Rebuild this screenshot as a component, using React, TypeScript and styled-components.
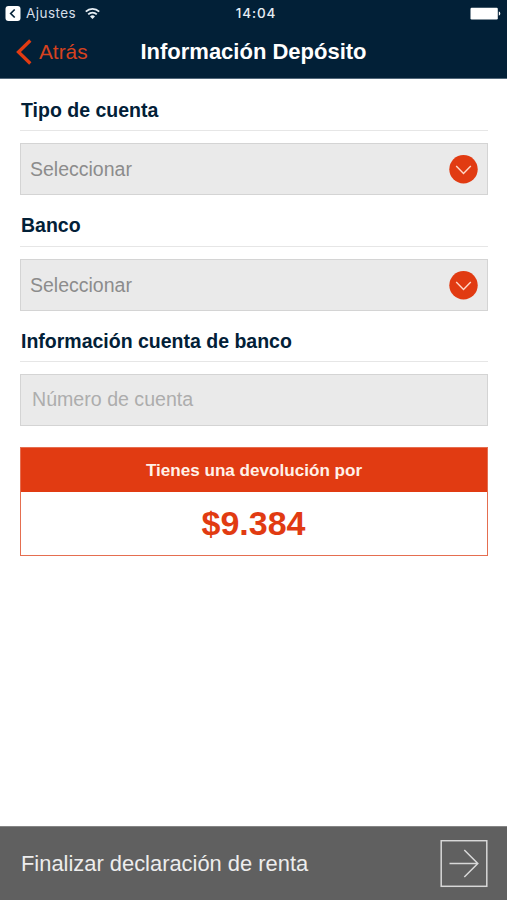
import React from "react";
import styled, { createGlobalStyle } from "styled-components";

const navy = "#022037";
const orange = "#e13b12";

const GlobalStyle = createGlobalStyle`
  * { box-sizing: border-box; }
  body { margin: 0; background: #fff; font-family: "Liberation Sans", Arial, sans-serif; }
`;

const Screen = styled.div`
  width: 100%;
  height: 900px;
  display: flex;
  flex-direction: column;
  overflow: hidden;
  background: #fff;
`;

const Header = styled.header`
  height: 79px;
  flex: none;
  background: ${navy};
  border-bottom: 1px solid #526779;
`;

const StatusBar = styled.div`
  height: 27px;
  display: grid;
  grid-template-columns: 1fr auto 1fr;
  align-items: center;
  padding: 0 6px 0 5px;
  color: #d5dee7;
  font-family: Inter, sans-serif;
  font-size: 13.5px;
  line-height: 27px;
`;

const StatusLeft = styled.div`
  display: flex;
  align-items: center;
`;

const ReturnLabel = styled.span`
  margin: 0 9px 0 5px;
  letter-spacing: 0.45px;
`;

const Clock = styled.span`
  font-weight: 500;
  letter-spacing: 0.9px;
  padding-left: 6px;
  color: #e6edf3;
`;

const Battery = styled.svg`
  justify-self: end;
`;

const NavBar = styled.div`
  height: 51px;
  display: grid;
  grid-template-columns: 1fr auto 1fr;
  align-items: center;
  padding: 0 15px 1px;
`;

const BackButton = styled.button`
  display: flex;
  align-items: center;
  gap: 6px;
  justify-self: start;
  padding: 0;
  border: 0;
  background: none;
  color: #d6421f;
  font: 20.8px/24px "Liberation Sans", Arial, sans-serif;
`;

const Title = styled.h1`
  margin: 0;
  color: #fff;
  font-size: 22px;
  line-height: 26px;
`;

const Form = styled.main`
  flex: 1;
  padding: 0 19px 0 20px;
`;

const Field = styled.section<{ $height: number }>`
  height: ${(p) => p.$height}px;
`;

const FieldTitle = styled.h2<{ $gap?: number }>`
  margin: 0;
  height: 52px;
  padding: 0 1px ${(p) => p.$gap ?? 9}px;
  display: flex;
  align-items: flex-end;
  border-bottom: 1px solid #e6e6e6;
  color: ${navy};
  font-size: 19.5px;
  line-height: 22px;
`;

const SelectBox = styled.button`
  width: 100%;
  height: 52px;
  margin-top: 12px;
  padding: 0 9px;
  display: flex;
  align-items: center;
  justify-content: space-between;
  border: 1px solid #d4d4d4;
  background: #eaeaea;
  color: #8c8c8c;
  font: 19.5px/22px "Liberation Sans", Arial, sans-serif;
`;

const AccountInput = styled.input`
  display: block;
  width: 100%;
  height: 52px;
  margin-top: 12px;
  padding: 0 11px 1px;
  border: 1px solid #d4d4d4;
  border-radius: 0;
  background: #eaeaea;
  font: 19.6px/22px "Liberation Sans", Arial, sans-serif;
  &::placeholder { color: #adadad; opacity: 1; }
`;

const RefundCard = styled.section`
  height: 109px;
  border: 1px solid #e56e50;
  text-align: center;
`;

const RefundHeading = styled.div`
  height: 44px;
  background: ${orange};
  color: #fff1e8;
  font-size: 17.1px;
  font-weight: 700;
  line-height: 45px;
`;

const Amount = styled.div`
  color: ${orange};
  font-size: 34px;
  font-weight: 700;
  line-height: 63px;
  padding-right: 1px;
`;

const Footer = styled.button`
  width: 100%;
  height: 74px;
  flex: none;
  display: flex;
  align-items: center;
  justify-content: space-between;
  padding: 0 19px 0 21px;
  border: 0;
  border-top: 1px solid #858585;
  background: #606060;
  color: #ededed;
  font: 21.9px/26px "Liberation Sans", Arial, sans-serif;
`;

const DownIcon = () => (
  <svg width="29" height="29" viewBox="0 0 29 29" fill="none">
    <circle cx="14.5" cy="14.3" r="14.2" fill={orange} />
    <path d="M7.2 11 14.5 18.4 21.8 11" stroke="#ffd9c9" strokeWidth="1.4" />
  </svg>
);

export default function App() {
  return (
    <Screen>
      <GlobalStyle />
      <Header>
        <StatusBar>
          <StatusLeft>
            <svg width="16" height="16" viewBox="0 0 16 16" fill="none">
              <rect x=".5" y="0" width="15" height="15" rx="3" fill="#fff" />
              <path d="M9.7 3.5 5.7 7.5l4 4" stroke={navy} strokeWidth="1.7" />
            </svg>
            <ReturnLabel>Ajustes</ReturnLabel>
            <svg width="15" height="12" viewBox="0 0 15 12" fill="none" stroke="#e8eff5" strokeWidth="1.8">
              <path d="M.8 3.7a9.5 9.5 0 0 1 13.4 0M3.2 6.3a6.1 6.1 0 0 1 8.6 0" />
              <path d="M7.5 11 5 8.5a3.5 3.5 0 0 1 5 0z" fill="#e8eff5" stroke="none" />
            </svg>
          </StatusLeft>
          <Clock>14:04</Clock>
          <Battery width="31" height="13" viewBox="0 0 31 13" fill="#fff">
            <rect x=".5" y=".7" width="27.3" height="11.7" rx="1.2" />
            <path d="M28.8 4.6c2 .5 2 3.6 0 4.1z" />
          </Battery>
        </StatusBar>
        <NavBar>
          <BackButton>
            <svg width="18" height="26" viewBox="0 0 18 26" fill="none">
              <path d="M15.3 1.5 3.5 13l11.8 11.5" stroke={orange} strokeWidth="3.3" />
            </svg>
            Atrás
          </BackButton>
          <Title>Información Depósito</Title>
        </NavBar>
      </Header>
      <Form>
        <Field $height={116}>
          <FieldTitle>Tipo de cuenta</FieldTitle>
          <SelectBox>Seleccionar<DownIcon /></SelectBox>
        </Field>
        <Field $height={115}>
          <FieldTitle $gap={10}>Banco</FieldTitle>
          <SelectBox>Seleccionar<DownIcon /></SelectBox>
        </Field>
        <Field $height={137}>
          <FieldTitle>Información cuenta de banco</FieldTitle>
          <AccountInput placeholder="Número de cuenta" />
        </Field>
        <RefundCard>
          <RefundHeading>Tienes una devolución por</RefundHeading>
          <Amount>$9.384</Amount>
        </RefundCard>
      </Form>
      <Footer>
        Finalizar declaración de renta
        <svg width="48" height="48" viewBox="0 0 48 48" fill="none" stroke="#d8d8d8" strokeWidth="1.5">
          <rect x="1.2" y=".7" width="45.6" height="45.6" />
          <path d="M9.5 23.5h28M24.3 10l13.5 13.5L24.3 37" />
        </svg>
      </Footer>
    </Screen>
  );
}
